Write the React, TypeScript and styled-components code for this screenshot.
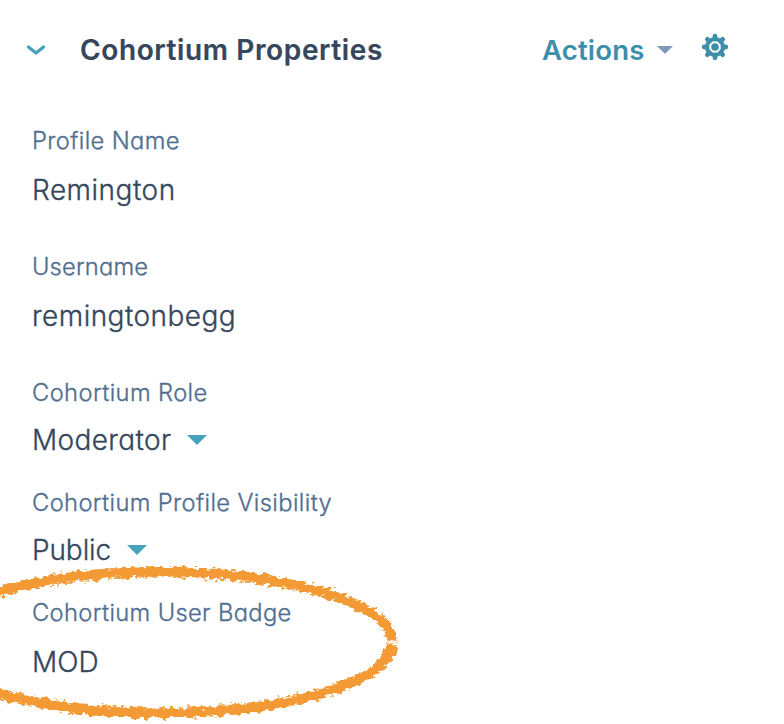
import React from "react";
import styled, { createGlobalStyle } from "styled-components";

const GlobalStyle = createGlobalStyle`
  * { box-sizing: border-box; }
  body { margin: 0; background: #fff; }
`;

const Panel = styled.main`
  position: relative;
  width: 784px;
  height: 724px;
  overflow: hidden;
  background: #fff;
  font-family: Inter, "Open Sans", sans-serif;
  font-feature-settings: "cv11";
  color: #36475c;
`;

const Header = styled.header`
  display: flex;
  align-items: center;
  height: 100px;
  padding: 0 55.5px 0 26px;
`;

const Chevron = styled.svg`
  width: 20px;
  height: 12px;
  margin-right: 34px;
`;

const Title = styled.h1`
  margin: 0;
  font-size: 28px;
  line-height: 36px;
  font-weight: 600;
  -webkit-text-stroke: 0.2px currentColor;
  white-space: nowrap;
  letter-spacing: 0.62px;
`;

const ActionsButton = styled.button`
  display: flex;
  align-items: center;
  gap: 12px;
  margin: 0 28px 0 auto;
  padding: 0;
  border: 0;
  background: none;
  font: inherit;
  font-feature-settings: inherit;
  font-size: 27.5px;
  line-height: 36px;
  font-weight: 600;
  letter-spacing: 0.2px;
  color: #3d8fa9;
`;

const Caret = styled.svg<{ $width: number }>`
  width: ${(p) => p.$width}px;
  height: ${(p) => p.$width / 2}px;
  flex: none;
`;

const Gear = styled.svg`
  width: 28px;
  height: 28px;
  margin-top: -6px;
`;

const Fields = styled.dl`
  display: flex;
  flex-direction: column;
  margin: 0;
  padding: 25px 32px 0;
`;

const Field = styled.div<{ $height: number }>`
  height: ${(p) => p.$height}px;
`;

const Label = styled.dt<{ $track: number }>`
  height: 32px;
  font-size: 23.7px;
  line-height: 32px;
  font-weight: 300;
  -webkit-text-stroke: 0.35px currentColor;
  white-space: nowrap;
  color: #516f90;
  letter-spacing: ${(p) => p.$track}px;
`;

const Value = styled.dd<{ $track: number; $gap: number }>`
  display: flex;
  align-items: center;
  gap: 16px;
  height: 36px;
  margin: ${(p) => p.$gap}px 0 0;
  font-size: 28px;
  line-height: 36px;
  font-weight: 300;
  -webkit-text-stroke: 0.35px currentColor;
  letter-spacing: ${(p) => p.$track}px;
`;

const Marker = styled.svg`
  position: absolute;
  left: 0;
  top: 550px;
  width: 784px;
  height: 174px;
  pointer-events: none;
`;

const Triangle = ({ width, color }: { width: number; color: string }) => (
  <Caret $width={width} viewBox="0 0 20 10" preserveAspectRatio="none" aria-hidden>
    <path d="M0 0H20L10 10Z" fill={color} />
  </Caret>
);

const fields = [
  { label: "Profile Name", value: "Remington", height: 126, gap: 15, lt: 0.38, vt: 0.5 },
  { label: "Username", value: "remingtonbegg", height: 126, gap: 15, lt: 0.18, vt: 0.46 },
  { label: "Cohortium Role", value: "Moderator", height: 110, gap: 13, lt: 0.4, vt: 0.36 },
  { label: "Cohortium Profile Visibility", value: "Public", height: 110, gap: 13, lt: 0.38, vt: -0.1 },
  { label: "Cohortium User Badge", value: "MOD", height: 100, gap: 15, lt: 0.36, vt: 0 },
];

const menuFields = new Set(["Cohortium Role", "Cohortium Profile Visibility"]);

const halves = (a: number, b: number) =>
  `M${160 - a} 93A${a} ${b} 0 0 1 ${160 + a} 90.6M${160 + a} 93.6A${a} ${b} 0 0 1 ${160 - a} 93`;

export default function App() {
  return (
    <>
      <GlobalStyle />
      <Panel>
        <Header>
          <Chevron viewBox="0 0 20 12" aria-hidden>
            <path d="M2.5 3L10 9L17.5 3" fill="none" stroke="#45a2ba" strokeWidth="3.4" strokeLinecap="round" strokeLinejoin="round" />
          </Chevron>
          <Title>Cohortium Properties</Title>
          <ActionsButton type="button">
            <span>Actions</span>
            <Triangle width={16} color="#7f98b8" />
          </ActionsButton>
          <Gear viewBox="-14 -14 28 28" aria-label="Settings">
            <g fill="none" stroke="#3d8fa9">
              {[0, 45, 90, 135].map((angle) => (
                <path key={angle} d="M0 -10.8V-8M0 8V10.8" strokeWidth="4.8" strokeLinecap="round" transform={`rotate(${angle})`} />
              ))}
              <circle r="8" strokeWidth="4" />
            </g>
            <circle r="3.8" fill="#3d8fa9" />
          </Gear>
        </Header>
        <Fields>
          {fields.map((f) => (
            <Field key={f.label} $height={f.height}>
              <Label $track={f.lt}>{f.label}</Label>
              <Value $track={f.vt} $gap={f.gap}>
                <span>{f.value}</span>
                {menuFields.has(f.label) && <Triangle width={20} color="#47a3bb" />}
              </Value>
            </Field>
          ))}
        </Fields>
        <Marker viewBox="0 0 784 174" aria-hidden>
          <defs>
            <filter id="crayon" filterUnits="userSpaceOnUse" x="-90" y="0" width="520" height="174" colorInterpolationFilters="sRGB">
              <feTurbulence type="fractalNoise" baseFrequency="0.16 0.3" numOctaves="3" seed="7" result="grain" />
              <feDisplacementMap in="SourceGraphic" in2="grain" scale="9" xChannelSelector="R" yChannelSelector="G" />
            </filter>
          </defs>
          <g fill="none" stroke="#f39a34" filter="url(#crayon)">
            <path d={halves(232, 70)} strokeWidth="9.4" />
            <path d={halves(236, 74.2)} strokeWidth="1.5" strokeDasharray="7 3 12 5 3 4" />
            <path d={halves(226.7, 64.5)} strokeWidth="1.5" strokeDasharray="4 3 9 6 2 5" />
          </g>
        </Marker>
      </Panel>
    </>
  );
}
